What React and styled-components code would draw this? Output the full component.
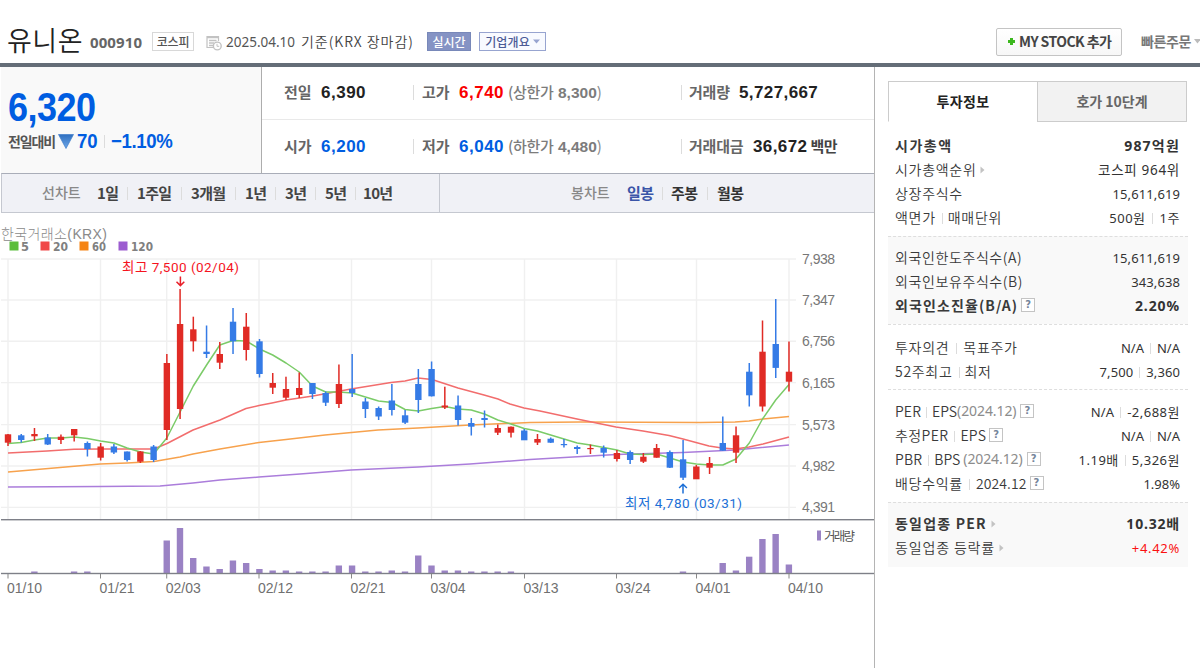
import React from 'react';
import styled, { createGlobalStyle } from 'styled-components';

const KR = '"Noto Sans CJK KR", sans-serif';
const NUM = '"Liberation Sans", "Noto Sans CJK KR", sans-serif';
const MIX = '"Noto Sans", "Noto Sans CJK KR", sans-serif';

const Global = createGlobalStyle`
  body { margin: 0; background: #fff; overflow: hidden; }
  * { box-sizing: border-box; }
`;

const Page = styled.div`
  width: 1200px;
  height: 668px;
  overflow: hidden;
  display: flex;
  flex-direction: column;
  font-family: ${KR};
  color: #444;
  white-space: nowrap;
`;

/* A run of text that starts after a gap and keeps a fixed column width. */
const Text = styled.span`
  flex: none;
  width: ${(p) => (p.$w ? p.$w + 'px' : 'auto')};
  margin-left: ${(p) => p.$gap || 0}px;
  margin-bottom: ${(p) => p.$up || 0}px;
  font-family: ${(p) => p.$font || KR};
  font-size: ${(p) => p.$size || 14}px;
  font-weight: ${(p) => p.$weight || 400};
  letter-spacing: ${(p) => p.$ls || 0}px;
  color: ${(p) => p.$color || '#444'};
  line-height: 20px;
`;

const Header = styled.header`
  height: 67px;
  flex: none;
  display: flex;
  align-items: center;
  padding: 20px 0 0 7px;
  border-bottom: 4px solid #646d77;
`;

const Title = styled.h1`
  margin: 0 0 3px;
  width: 83px;
  font-size: 27px;
  font-weight: 350;
  line-height: 36px;
  letter-spacing: 0.5px;
  color: #222;
`;

const Tag = styled.span`
  display: flex;
  align-items: center;
  justify-content: center;
  flex: none;
  width: ${(p) => p.$w}px;
  height: 19px;
  margin-left: ${(p) => p.$gap}px;
  border: 1px solid ${(p) => p.$border};
  background: ${(p) => p.$bg || '#fff'};
  color: ${(p) => p.$color};
  font-size: 12px;
  font-weight: 500;
  letter-spacing: ${(p) => p.$ls || 0}px;
  line-height: 15px;
`;

const AddButton = styled.button`
  display: flex;
  align-items: center;
  width: 126px;
  height: 28px;
  padding: 0 0 0 10px;
  margin-left: auto;
  border: 1px solid #c4c4c4;
  border-radius: 2px;
  background: linear-gradient(#fff, #f7f7f7);
`;

const QuickOrder = styled.div`
  display: flex;
  align-items: center;
  width: 59px;
  margin-left: 19px;
`;

const Main = styled.main`
  flex: 1;
  display: flex;
  min-height: 0;
`;

const Left = styled.section`
  width: 875px;
  flex: none;
  padding-left: 1px;
  border-right: 1px solid #b4b4b4;
`;

const Quote = styled.div`
  display: flex;
  height: 106px;
`;

const PriceBox = styled.div`
  width: 261px;
  padding: 17px 0 0 7px;
  background: #f9f9f9;
  border-right: 1px solid #adadad;
`;

const Price = styled.div`
  margin-bottom: 1px;
  font: bold 40px/46px ${NUM};
  letter-spacing: -0.6px;
  transform: scaleX(0.9);
  transform-origin: left;
  color: #005de1;
`;

const Change = styled.span`
  flex: none;
  width: ${(p) => p.$w}px;
  margin-left: ${(p) => p.$gap || 0}px;
  font: bold 20px/20px ${NUM};
  letter-spacing: ${(p) => p.$ls || 0}px;
  transform: scaleX(0.93);
  transform-origin: left;
  color: #005de1;
`;

const Line = styled.div`
  display: flex;
  align-items: center;
  height: 20px;
`;

const QuoteRows = styled.div`
  flex: 1;
`;

const QuoteRow = styled.div`
  display: flex;
  align-items: center;
  height: 53px;
  padding: 0 0 ${(p) => (p.$last ? 0 : 1)}px 22px;
  border-bottom: ${(p) => (p.$last ? 'none' : '1px solid #e9e9e9')};
`;

const Cell = styled.div`
  display: flex;
  align-items: center;
  flex: none;
  width: ${(p) => p.$w}px;
`;

const Bar = styled.i`
  flex: none;
  width: 1px;
  height: ${(p) => p.$h || 13}px;
  margin: 0 ${(p) => p.$r || 0}px 0 ${(p) => p.$l || 0}px;
  background: ${(p) => p.$c || '#dcdcdc'};
`;

const Toolbar = styled.nav`
  display: flex;
  height: 40px;
  border: 1px solid #c5c8d0;
  border-top-color: #a9adb8;
  border-right: 0;
  background: #f0f1f6;
`;

const ToolGroup = styled.div`
  display: flex;
  align-items: center;
  padding-left: ${(p) => p.$pad}px;
  width: ${(p) => p.$w}px;
  border-right: ${(p) => (p.$edge ? '1px solid #c5c8d0' : 'none')};
`;

const ChartArea = styled.div`
  height: 455px;
`;

const Side = styled.aside`
  width: 325px;
  padding: 14px 12px 0 13px;
`;

const Tabs = styled.div`
  display: flex;
  height: 41px;
  width: 299px;
`;

const Tab = styled.div`
  width: ${(p) => (p.$on ? 149 : 150)}px;
  display: flex;
  justify-content: center;
  padding-top: 9px;
  border: 1px solid #ccc;
  border-bottom-color: ${(p) => (p.$on ? 'transparent' : '#ccc')};
  border-right-width: ${(p) => (p.$on ? 0 : 1)}px;
  background: ${(p) => (p.$on ? '#fff' : '#f2f2f2')};
`;

const Group = styled.div`
  width: 300px;
  padding: ${(p) => p.$pt}px 8px ${(p) => p.$pb}px 7px;
  border-top: ${(p) => (p.$first ? 'none' : '1px dashed #dedede')};
  background: ${(p) => (p.$tint ? '#f9f9f9' : 'transparent')};
`;

const InfoRow = styled.div`
  display: flex;
  align-items: center;
  height: 24px;
`;

const InfoValue = styled.div`
  display: flex;
  align-items: center;
  margin-left: auto;
`;

const Help = styled.span`
  display: flex;
  align-items: center;
  justify-content: center;
  flex: none;
  width: 14px;
  height: 14px;
  margin: 0 0 2px ${(p) => p.$gap}px;
  border: 1px solid #c4c4c4;
  background: #fff;
  font: bold 10px/12px "DejaVu Sans", sans-serif;
  color: #75859b;
`;

const Arrow = ({ gap = 4 }) => (
  <svg width="5" height="8" style={{ marginLeft: gap }}>
    <path d="M0.5 0.5L4.5 4L0.5 7.5Z" fill="#c3c3c3" />
  </svg>
);

const GRID_X = [8, 100.5, 166.7, 259, 351.5, 431.5, 524.5, 616.5, 696.5, 789];
const GRID_Y = [259, 300, 341.3, 382.6, 424.6, 466, 507.4];
const PRICES = ['7,938', '7,347', '6,756', '6,165', '5,573', '4,982', '4,391'];
const DATES = ['01/10', '01/21', '02/03', '02/12', '02/21', '03/04', '03/13', '03/24', '04/01', '04/10'];

/* [direction, body top, body bottom, wick top, wick bottom] */
const CANDLES = [
  [1, 434.3, 442.7, 434, 446], [0, 435.3, 440, 434, 442.5], [1, 434, 436.3, 428, 441],
  [0, 437.5, 444.5, 434, 445], [1, 436.7, 440, 434.5, 444], [1, 429, 435.3, 429, 441.5],
  [0, 443, 449, 441.5, 456.5], [1, 446.5, 457.7, 443, 460.5], [0, 446.5, 452.5, 444, 454],
  [0, 451.5, 460, 451.5, 461.5], [1, 451.5, 461.7, 451, 463], [0, 446.5, 460, 445, 462],
  [1, 363, 430, 354, 440], [1, 324, 409, 289, 419], [1, 329.3, 341.3, 316.7, 351.5],
  [0, 351.7, 354, 325.5, 358], [1, 354, 362.7, 342, 369], [0, 321.7, 341.3, 308, 354],
  [1, 326.7, 350, 313, 360.5], [0, 341.3, 374, 339, 377.5], [1, 383, 387.7, 373, 394],
  [1, 389, 397.7, 376.7, 400], [1, 388, 395, 372.5, 398], [0, 383, 394, 383, 399],
  [0, 393, 402.7, 391.5, 406], [1, 384, 404, 364.5, 408], [0, 389, 393, 354, 397],
  [0, 401.5, 409, 398, 418], [0, 408, 416.5, 406.5, 420], [0, 400.5, 410, 384, 415.5],
  [0, 415.3, 422.7, 410, 424], [0, 384, 400, 369, 413], [0, 369, 396.3, 361.5, 396.5],
  [1, 405.5, 407.5, 386.7, 409], [0, 405.5, 420, 395.5, 425.5], [0, 423, 426.7, 418, 435.5],
  [0, 418, 420, 410.5, 427.5], [1, 428, 432.7, 424.5, 435], [1, 426.7, 432.7, 426.5, 437.5],
  [0, 430.5, 440.3, 429, 440], [1, 439, 442.6, 434, 445], [0, 438.7, 442.7, 437.5, 443],
  [0, 444, 445.2, 439, 447.5], [0, 447, 449, 445.5, 454], [1, 448, 449.2, 444.5, 454],
  [0, 448, 452.7, 445.5, 457.5], [1, 453, 459, 450, 461.5], [0, 452, 460, 450.5, 464],
  [1, 456.7, 461.7, 453, 463], [1, 448, 457.7, 444, 457.7], [0, 452, 467.7, 450.5, 468],
  [0, 459.3, 477.7, 440, 480], [1, 466.5, 479.3, 465, 479], [1, 463, 467.7, 457, 474],
  [0, 443, 450.7, 416.5, 450.7], [1, 435.3, 452.7, 426.5, 463], [0, 371.7, 395.3, 363, 406.5],
  [1, 351.7, 406.5, 320.5, 411.5], [0, 344, 367.9, 299, 378], [1, 371.7, 381.7, 341.5, 391.5],
];
const cx = (i) => 8 + i * 13.237;

const MA5 = [
  443.5, 442.5, 440, 438, 438, 437, 438.5, 441, 443, 448, 452, 454, 438, 412, 386, 365, 345, 340.5, 341, 349,
  355, 363, 372, 386, 392, 392, 393, 397, 401, 402.5, 409.5, 411, 408.5, 406.5, 409, 410, 414, 420, 424, 428.5,
  431, 435, 439, 443, 445, 447.5, 450, 454, 454.5, 454, 458, 462, 464, 465, 465, 459, 443, 419, 400, 384.5,
].map((y, i) => `${cx(i).toFixed(1)},${y}`).join(' ');
const MA20 = '8,453 47,451 74,449.3 100,449 154,449 167,443.5 193,430 220,420 246,408.5 259,405.5 272,403 286,400 313,396 351,389 391,382.5 405,381 418,378 432,379.5 458,388 484,395 498,399 510,404 524,408 540,411 577,419 616,427 643,431 669,435.5 683,439 709,446 722,448 735,449 749,447 763,444 789,437';
const MA60 = '8,472 60,467.5 100,464 127,463 154,461.5 180,457 193,454 220,449 259,442.5 286,439.5 325,435 378,430 418,428 470,425 530,422.5 580,422 700,422.5 735,422 749,421 763,419 789,416.5';
const MA120 = '8,487 100,486.5 160,486 193,483 220,480 259,477 300,474 351,470 418,467 470,464 530,459.5 616,454.5 683,452.5 735,450 789,445';

const VOLUMES = {
  2: 1.5, 5: 1.5, 6: 1.5, 12: 32.5, 13: 45, 14: 15, 15: 6.5, 16: 4, 17: 12.5, 18: 10, 19: 4, 20: 2.5, 21: 2.5,
  22: 1.5, 23: 1.5, 24: 1.5, 25: 7.5, 26: 7.5, 27: 1.5, 28: 1.5, 29: 2.5, 30: 1.5, 31: 17.5, 32: 7.5, 33: 2.5,
  34: 2.5, 35: 1.5, 36: 1.5, 37: 1.5, 38: 1.5, 51: 1.5, 54: 10, 55: 2.5, 56: 16.3, 57: 34, 58: 39, 59: 8.5,
};
const LEGEND = [
  [9, '#5bbd3c', '5', 21, 8], [40, '#f04848', '20', 53, 15], [79, '#f58414', '60', 92, 14], [118, '#9c5cd0', '120', 131, 22],
];

function Chart() {
  return (
    <svg width="873" height="455" viewBox="1 213 873 455" fontFamily={NUM} fontSize="14" display="block">
      <text x="1" y="238.5" fontFamily={NUM} fontSize="14" fontWeight="300" fill="#8a8a8a" textLength="106">한국거래소(KRX)</text>
      {LEGEND.map(([x, c, t, tx, w]) => (
        <g key={t}>
          <rect x={x + 0.5} y="241.5" width="9" height="9" fill={c} />
          <text x={tx} y="250.5" fontSize="11.5" fontFamily='"DejaVu Sans", sans-serif' fontWeight="bold" fill="#808080" textLength={w} lengthAdjust="spacingAndGlyphs">{t}</text>
        </g>
      ))}
      <g stroke="#f0f0f0" strokeWidth="1.4">
        {GRID_Y.map((y) => <line key={y} x1="1" x2="796" y1={y} y2={y} />)}
        {GRID_X.map((x) => <line key={x} x1={x} x2={x} y1="259" y2="519" />)}
      </g>
      <g fill="none" strokeWidth="1.5" strokeLinejoin="round">
        <polyline points={MA120} stroke="#ab7ddb" />
        <polyline points={MA60} stroke="#f7a24d" />
        <polyline points={MA20} stroke="#f26d6d" />
        <polyline points={MA5} stroke="#7bcb68" />
      </g>
      {CANDLES.map(([up, t, b, wt, wb], i) => (
        <g key={i} fill={up ? '#e02b25' : '#357be6'}>
          <rect x={cx(i) - 0.75} y={wt} width="1.5" height={wb - wt} />
          <rect x={cx(i) - 3.2} y={t} width="6.4" height={b - t} />
        </g>
      ))}
      <text x="122" y="271.5" fontSize="13.5" fontFamily='Roboto, "Noto Sans CJK KR", sans-serif' fill="#f5141e" textLength="117">최고 7,500 (02/04)</text>
      <path d="M180.4 276.5V285M176.5 281.8L180.4 285.6L184.3 281.8" fill="none" stroke="#e8202a" strokeWidth="1.5" />
      <text x="625" y="507.5" fontSize="13.5" fontFamily='Roboto, "Noto Sans CJK KR", sans-serif' fill="#1c6fd6" textLength="117">최저 4,780 (03/31)</text>
      <path d="M683 493.5V484.5M679.1 488L683 484.2L686.9 488" fill="none" stroke="#1c6fd6" strokeWidth="1.5" />
      {PRICES.map((p, i) => (
        <text key={p} x="802" y={GRID_Y[i] + 5} fill="#777" textLength="33">{p}</text>
      ))}
      <rect x="1" y="519" width="873" height="1.4" fill="#7e8088" />
      {Object.entries(VOLUMES).map(([i, h]) => (
        <rect key={i} x={cx(+i) - 3.3} y={573 - h} width="6.4" height={h} fill="#9a82c4" />
      ))}
      <rect x="1" y="572.8" width="873" height="1.4" fill="#7e8088" />
      {DATES.map((d, i) => (
        <g key={d}>
          <rect x={GRID_X[i] - 0.5} y="574" width="1" height="4.5" fill="#888" />
          <text x={GRID_X[i] - 1} y="593" fill="#707070" textLength="35">{d}</text>
        </g>
      ))}
      <rect x="817" y="530.5" width="4" height="10" fill="#9a82c4" />
      <text x="824" y="540.5" fontFamily={KR} fontSize="12.5" fill="#555" textLength="31">거래량</text>
    </svg>
  );
}

/* [label, gap before, width, gap before the divider] */
const LINE_TOOLS = [
  ['1일', 15, 21, 9], ['1주일', 9, 35, 9], ['3개월', 9, 35, 9], ['1년', 9, 21, 9], ['3년', 9, 21, 9], ['5년', 9, 21, 9], ['10년', 7, 32, 0],
];
const CANDLE_TOOLS = [['일봉', 17, 26, '#3a55a8'], ['주봉', 8, 27, '#333'], ['월봉', 9, 27, '#333']];

const V = ({ children, ls = 0.1, bold, color, size = 13 }) => (
  <Text $font={MIX} $size={bold ? 14 : size} $ls={ls} $weight={bold ? 700 : 400} $color={color || '#333'}>{children}</Text>
);
const L = ({ children, ls = 0.7, gap, bold }) => (
  <Text $ls={ls} $gap={gap} $up={2} $weight={bold ? 700 : 350} $color="#3a3a3a">{children}</Text>
);
const Period = ({ gap }) => <Text $font={MIX} $size={14} $gap={gap} $up={2} $color="#8c8c8c" $ls={-0.1}>(2024.12)</Text>;

export default function App() {
  return (
    <Page>
      <Global />
      <Header>
        <Title>유니온</Title>
        <Text $font={MIX} $size={15} $weight={700} $color="#666" $w={62} $ls={0.1}>000910</Text>
        <Tag $w={42} $gap={0} $border="#d8d8d8" $color="#555" $ls={-0.2}>코스피</Tag>
        <svg width="16" height="16" viewBox="0 0 16 16" style={{ marginLeft: 12, marginTop: 3 }} fill="none" stroke="#c2c2c2">
          <path d="M8 12.5H1V1.5H12.5V6" strokeWidth="1.2" />
          <path d="M1 2.5H12.5M3 5.5H10.5M3 8H8M3 10.5H7" strokeWidth="1.3" />
          <circle cx="11.3" cy="11" r="3.9" fill="#fff" strokeWidth="1.4" />
          <path d="M11 8.8V11.3H13.2" />
        </svg>
        <Text $font={MIX} $size={13.5} $gap={4} $w={75} $color="#555" $ls={0}>2025.04.10</Text>
        <Text $size={14} $weight={350} $up={2} $w={126} $color="#444" $ls={0.95}>기준(KRX 장마감)</Text>
        <Tag $w={44} $gap={0} $border="#7888b9" $bg="#8593c4" $color="#fff" $ls={0}>실시간</Tag>
        <Tag $w={67} $gap={8} $border="#97a4d0" $bg="#f8faff" $color="#4c5b96" $ls={0.1}>
          기업개요
          <svg width="7" height="5" style={{ marginLeft: 3 }}><path d="M0 0.5H7L3.5 4.5Z" fill="#97a4d0" /></svg>
        </Tag>
        <AddButton>
          <svg width="9" height="9"><path d="M3 1H6V3H8V6H6V8H3V6H1V3H3Z" fill="#3cb81e" /></svg>
          <Text $size={14} $weight={600} $up={1} $gap={3} $ls={-0.55}>MY STOCK 추가</Text>
        </AddButton>
        <QuickOrder>
          <Text $size={14} $weight={700} $up={1} $w={53} $color="#777" $ls={-0.4}>빠른주문</Text>
          <svg width="7" height="5"><path d="M0 0H7L3.5 4.5Z" fill="#bbb" /></svg>
        </QuickOrder>
      </Header>
      <Main>
        <Left>
          <Quote>
            <PriceBox>
              <Price>6,320</Price>
              <Line>
                <Text $size={14} $weight={700} $w={50} $ls={-1.1} $color="#555">전일대비</Text>
                <svg width="16" height="15" viewBox="0 0 16 15">
                  <defs>
                    <linearGradient id="fall" x1="0" y1="0" x2="0" y2="1">
                      <stop offset="0" stopColor="#2f6fc0" />
                      <stop offset="1" stopColor="#6fa8e8" />
                    </linearGradient>
                  </defs>
                  <path d="M0.5 0.5H15.5L8 14.5Z" fill="url(#fall)" stroke="#3f7cc9" strokeWidth="0.7" />
                </svg>
                <Change $gap={3} $w={27}>70</Change>
                <Bar $r={6} />
                <Change $w={66} $ls={-0.4}>−1.10%</Change>
              </Line>
            </PriceBox>
            <QuoteRows>
              {[
                ['전일', '6,390', '#222', '고가', '6,740', '#fa0000', '상한가', '8,300', '거래량', '5,727,667', 50, ''],
                ['시가', '6,200', '#005de1', '저가', '6,040', '#005de1', '하한가', '4,480', '거래대금', '36,672', 64, '백만'],
              ].map((r, i) => (
                <QuoteRow key={r[0]} $last={i === 1}>
                  <Cell $w={129}>
                    <Text $size={15} $weight={700} $up={2} $w={37} $color="#666">{r[0]}</Text>
                    <Text $font={NUM} $size={17} $weight={700} $color={r[2]} $ls={0.5}>{r[1]}</Text>
                  </Cell>
                  <Cell $w={268}>
                    <Bar $h={15} $r={8} />
                    <Text $size={15} $weight={700} $up={2} $w={37} $color="#666">{r[3]}</Text>
                    <Text $font={NUM} $size={17} $weight={700} $w={49} $color={r[5]} $ls={0.5}>{r[4]}</Text>
                    <Text $size={15} $weight={500} $up={2} $w={50} $color="#7c7c7c" $ls={-0.3}>({r[6]}</Text>
                    <Text $font={NUM} $size={15.5} $weight={700} $color="#7c7c7c">{r[7]}</Text>
                    <Text $size={15} $up={2} $color="#888">)</Text>
                  </Cell>
                  <Cell $w={180}>
                    <Bar $h={15} $r={7} />
                    <Text $size={15} $weight={700} $up={2} $w={r[10]} $color="#666" $ls={-0.2}>{r[8]}</Text>
                    <Text $font={NUM} $size={17} $weight={700} $color="#222" $ls={0.4}>{r[9]}</Text>
                    <Text $size={15} $weight={700} $up={2} $gap={3} $ls={-0.4}>{r[11]}</Text>
                  </Cell>
                </QuoteRow>
              ))}
            </QuoteRows>
          </Quote>
          <Toolbar>
            <ToolGroup $w={438} $pad={40} $edge>
              <Text $size={14} $weight={500} $up={2} $w={40} $color="#888">선차트</Text>
              {LINE_TOOLS.map(([t, g, w, s]) => (
                <React.Fragment key={t}>
                  <Text $size={15} $weight={700} $up={1} $gap={g} $w={w} $ls={-0.7} $color="#444">{t}</Text>
                  {s > 0 && <Bar $l={s} />}
                </React.Fragment>
              ))}
            </ToolGroup>
            <ToolGroup $w={434} $pad={131}>
              <Text $size={14} $weight={500} $up={2} $w={39} $color="#888">봉차트</Text>
              {CANDLE_TOOLS.map(([t, g, w, c], i) => (
                <React.Fragment key={t}>
                  <Text $size={15} $weight={700} $up={1} $gap={g} $w={w} $ls={-0.6} $color={c}>{t}</Text>
                  {i < 2 && <Bar $l={9} />}
                </React.Fragment>
              ))}
            </ToolGroup>
          </Toolbar>
          <ChartArea><Chart /></ChartArea>
        </Left>
        <Side>
          <Tabs>
            <Tab $on><Text $size={14} $weight={700} $color="#222" $ls={0.4}>투자정보</Text></Tab>
            <Tab><Text $size={14} $weight={700} $color="#666" $ls={0}>호가 10단계</Text></Tab>
          </Tabs>
          <Group $first $pt={12} $pb={6}>
            <InfoRow><L bold ls={1.5}>시가총액</L><InfoValue><V bold ls={1.2}>987억원</V></InfoValue></InfoRow>
            <InfoRow><L>시가총액순위</L><Arrow /><InfoValue><V ls={0.7} size={13.5}>코스피 964위</V></InfoValue></InfoRow>
            <InfoRow><L>상장주식수</L><InfoValue><V>15,611,619</V></InfoValue></InfoRow>
            <InfoRow><L>액면가</L><Bar $l={6} $r={5} $h={11} /><L>매매단위</L>
              <InfoValue><V ls={0.5}>500원</V><Bar $l={6} $r={7} $h={11} /><V ls={0.5}>1주</V></InfoValue></InfoRow>
          </Group>
          <Group $tint $pt={9} $pb={6}>
            <InfoRow><L ls={0.6}>외국인한도주식수(A)</L><InfoValue><V>15,611,619</V></InfoValue></InfoRow>
            <InfoRow><L ls={0.6}>외국인보유주식수(B)</L><InfoValue><V>343,638</V></InfoValue></InfoRow>
            <InfoRow><L bold ls={1.1}>외국인소진율(B/A)</L><Help $gap={3}>?</Help><InfoValue><V bold ls={0.9}>2.20%</V></InfoValue></InfoRow>
          </Group>
          <Group $pt={11} $pb={5}>
            <InfoRow><L>투자의견</L><Bar $l={7} $r={6} $h={11} /><L>목표주가</L>
              <InfoValue><V ls={0}>N/A</V><Bar $l={6} $r={6} $h={11} /><V ls={0}>N/A</V></InfoValue></InfoRow>
            <InfoRow><L>52주최고</L><Bar $l={6} $r={5} $h={11} /><L>최저</L>
              <InfoValue><V>7,500</V><Bar $l={6} $r={6} $h={11} /><V>3,360</V></InfoValue></InfoRow>
          </Group>
          <Group $pt={10} $pb={6}>
            <InfoRow><L ls={0.1}>PER</L><Bar $l={5} $r={5} $h={11} /><L ls={0}>EPS</L><Period gap={0} /><Help $gap={4}>?</Help>
              <InfoValue><V>N/A</V><Bar $l={6} $r={6} $h={11} /><V ls={0.5}>-2,688원</V></InfoValue></InfoRow>
            <InfoRow><L ls={0.4}>추정PER</L><Bar $l={6} $r={5} $h={11} /><L ls={0.2}>EPS</L><Help $gap={3}>?</Help>
              <InfoValue><V ls={0}>N/A</V><Bar $l={6} $r={6} $h={11} /><V ls={0}>N/A</V></InfoValue></InfoRow>
            <InfoRow><L ls={0.2}>PBR</L><Bar $l={6} $r={5} $h={11} /><L ls={0}>BPS</L><Period gap={3} /><Help $gap={4}>?</Help>
              <InfoValue><V ls={0.5}>1.19배</V><Bar $l={6} $r={6} $h={11} /><V ls={0.5}>5,326원</V></InfoValue></InfoRow>
            <InfoRow><L>배당수익률</L><Bar $l={6} $r={6} $h={11} /><L ls={0.1}>2024.12</L><Help $gap={3}>?</Help>
              <InfoValue><V ls={0}>1.98%</V></InfoValue></InfoRow>
          </Group>
          <Group $tint $pt={9} $pb={7}>
            <InfoRow><L bold ls={1.2}>동일업종 PER</L><Arrow /><InfoValue><V bold ls={0.8}>10.32배</V></InfoValue></InfoRow>
            <InfoRow><L ls={0.85}>동일업종 등락률</L><Arrow /><InfoValue><V ls={0.7} color="#fa1111">+4.42%</V></InfoValue></InfoRow>
          </Group>
        </Side>
      </Main>
    </Page>
  );
}
